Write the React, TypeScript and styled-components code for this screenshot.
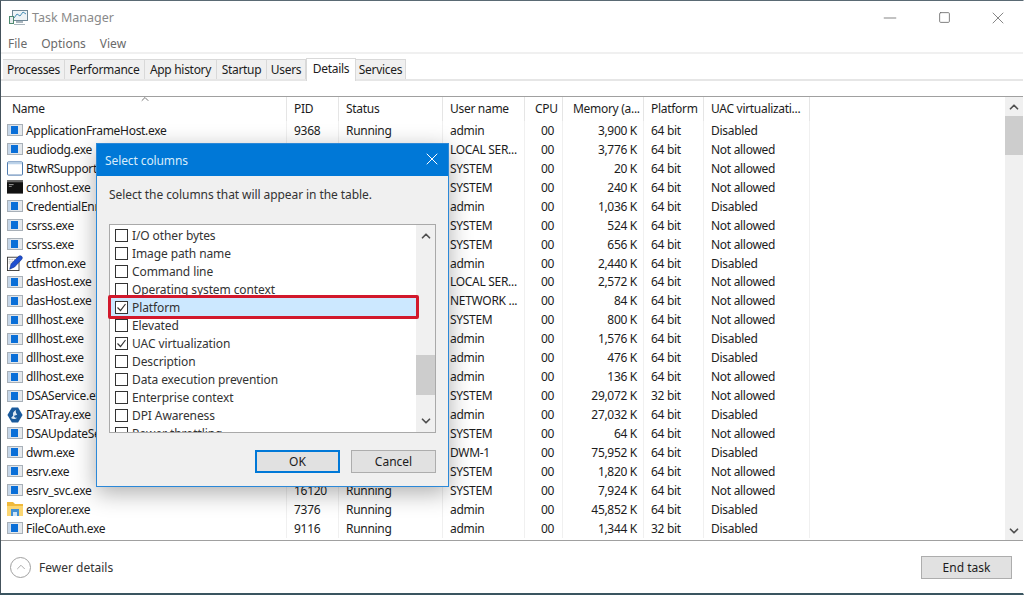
import React from "react";
import styled, { createGlobalStyle } from "styled-components";
import { X, ChevronUp, ChevronDown, Minus, Square } from "lucide-react";

const GlobalStyle = createGlobalStyle`
  html, body {
    margin: 0;
    padding: 0;
    background: #ffffff;
    overflow: hidden;
  }
  * {
    box-sizing: border-box;
  }
`;

const Window = styled.div`
  position: relative;
  width: 1024px;
  height: 595px;
  display: flex;
  flex-direction: column;
  background: #ffffff;
  border-top: 1px solid #5a6a74;
  border-left: 1px solid #44525c;
  border-right: 1px solid #ffffff;
  border-bottom: 2px solid #3a5560;
  font-family: "Noto Sans", "Open Sans", sans-serif;
  font-size: 12px;
  color: #1c1c1c;
  overflow: hidden;
`;

const TitleBar = styled.div`
  height: 33px;
  flex: none;
  display: flex;
  align-items: center;
  padding-left: 8px;
  gap: 4px;
  color: #8a8a8a;
`;

const WindowTitle = styled.span`
  flex: 1;
  font-size: 12.5px;
`;

const WindowButton = styled.div`
  width: 50px;
  height: 33px;
  display: flex;
  align-items: center;
  justify-content: center;
  color: #6e6e6e;
`;

const MenuBar = styled.div`
  height: 20px;
  flex: none;
  display: flex;
  align-items: center;
  gap: 14px;
  padding: 1px 0 0 7px;
  color: #6a6a6a;
  border-bottom: 2px solid #f0f0f0;
`;

const TabStrip = styled.div`
  height: 27px;
  flex: none;
  display: flex;
  align-items: flex-end;
  padding-left: 2px;
  border-bottom: 2px solid #e6e6e6;
  letter-spacing: -0.3px;
`;

const Tab = styled.div<{ $active?: boolean; $width: number }>`
  width: ${({ $width }) => $width}px;
  height: ${({ $active }) => ($active ? 23 : 20)}px;
  margin-bottom: ${({ $active }) => ($active ? -2 : 0)}px;
  padding-bottom: ${({ $active }) => ($active ? 3 : 0)}px;
  display: flex;
  align-items: center;
  justify-content: center;
  background: ${({ $active }) => ($active ? "#ffffff" : "#f0f0f0")};
  border: 1px solid #d9d9d9;
  border-bottom: none;
  border-left-width: ${({ $active }) => ($active ? 1 : 0)}px;
  white-space: nowrap;
  position: relative;
`;

const TabGap = styled.div`
  height: 16px;
  flex: none;
  border-bottom: 1px solid #a0a0a0;
`;

const Content = styled.div`
  flex: 1;
  min-height: 0;
  display: flex;
  border-bottom: 1px solid #a0a0a0;
`;

const Table = styled.div`
  flex: 1;
  min-width: 0;
  position: relative;
  overflow: hidden;
  letter-spacing: -0.3px;
`;

const columns = "286px 52px 104px 82px 38px 81px 60px 106px";

const HeaderRow = styled.div`
  height: 24px;
  display: grid;
  grid-template-columns: ${columns};
  position: relative;
`;

const HeaderCell = styled.div<{ $pad?: number }>`
  display: flex;
  align-items: center;
  padding: 0 0 2px ${({ $pad }) => $pad ?? 7}px;
  border-right: 1px solid #e5e5e5;
  white-space: nowrap;
  overflow: hidden;
`;

const SortArrow = styled.div`
  position: absolute;
  left: 138px;
  top: -4px;
  color: #777777;
  display: flex;
`;

const Row = styled.div`
  height: 18.95px;
  display: grid;
  grid-template-columns: ${columns};
`;

const Cell = styled.div<{ $right?: boolean; $pad?: number }>`
  display: flex;
  align-items: center;
  justify-content: ${({ $right }) => ($right ? "flex-end" : "flex-start")};
  padding: 0 6px 0 ${({ $pad }) => $pad ?? 7}px;
  border-right: 1px solid #f0f0f0;
  white-space: nowrap;
  overflow: hidden;
`;

const NameCell = styled(Cell)`
  padding-left: 6px;
  gap: 3px;
`;

const IconSlot = styled.span`
  width: 16px;
  flex: none;
  display: flex;
  justify-content: center;
`;

const ScrollBar = styled.div<{ $width: number }>`
  width: ${({ $width }) => $width}px;
  flex: none;
  background: #f0f0f0;
  display: flex;
  flex-direction: column;
  align-items: center;
  color: #505050;
`;

const ScrollArrow = styled.div<{ $height: number }>`
  height: ${({ $height }) => $height}px;
  flex: none;
  width: 100%;
  display: flex;
  align-items: center;
  justify-content: center;
`;

const ScrollThumb = styled.div<{ $top: number; $height: number }>`
  width: 100%;
  height: ${({ $height }) => $height}px;
  margin-top: ${({ $top }) => $top}px;
  background: #cdcdcd;
  flex: none;
`;

const ScrollFill = styled.div`
  flex: 1;
`;

const Footer = styled.div`
  height: 52px;
  flex: none;
  display: flex;
  align-items: center;
  justify-content: space-between;
  padding: 0 11px 0 9px;
`;

const FewerDetails = styled.div`
  display: flex;
  align-items: center;
  gap: 8px;
  color: #333333;
`;

const RoundButton = styled.div`
  width: 21px;
  height: 21px;
  border-radius: 50%;
  border: 1px solid #a0a0a0;
  display: flex;
  align-items: center;
  justify-content: center;
  color: #a0a0a0;
`;

const Button = styled.div<{ $default?: boolean; $width: number }>`
  width: ${({ $width }) => $width}px;
  height: 23px;
  display: flex;
  align-items: center;
  justify-content: center;
  background: #e1e1e1;
  border: ${({ $default }) =>
    $default ? "2px solid #0078d7" : "1px solid #adadad"};
  color: #1c1c1c;
`;

const Dialog = styled.div`
  position: absolute;
  left: 95px;
  top: 142px;
  width: 353px;
  height: 344px;
  background: #f0f0f0;
  border: 1px solid #2b88d8;
  box-shadow: 0 6px 22px rgba(0, 0, 0, 0.32);
  display: flex;
  flex-direction: column;
`;

const DialogTitle = styled.div`
  height: 32px;
  flex: none;
  background: #0078d7;
  color: #d8ecfb;
  display: flex;
  align-items: center;
  justify-content: space-between;
  padding: 1px 6px 0 8px;
  letter-spacing: -0.1px;
`;

const CloseIcon = styled.span`
  display: flex;
  color: #ffffff;
  margin-top: -3px;
`;

const DialogBody = styled.div`
  flex: 1;
  display: flex;
  flex-direction: column;
  padding: 10px 12px 13px 12px;
`;

const Prompt = styled.div`
  height: 18px;
  color: #333333;
  margin-bottom: 20px;
  white-space: nowrap;
  letter-spacing: -0.08px;
`;

const ListBox = styled.div`
  height: 209px;
  display: flex;
  background: #ffffff;
  border: 1px solid #a9a9a9;
  overflow: hidden;
`;

const List = styled.div`
  flex: 1;
  min-width: 0;
  display: flex;
  flex-direction: column;
  padding-top: 1px;
`;

const Option = styled.div<{ $selected?: boolean }>`
  height: 18px;
  flex: none;
  display: flex;
  align-items: center;
  gap: 4px;
  padding-left: 5px;
  background: ${({ $selected }) => ($selected ? "#cce8ff" : "transparent")};
  color: #333333;
  white-space: nowrap;
  letter-spacing: -0.1px;
`;

const CheckBox = styled.div`
  width: 13px;
  height: 13px;
  flex: none;
  background: #ffffff;
  border: 1px solid #333333;
  display: flex;
  align-items: center;
  justify-content: center;
`;

const Highlight = styled.div`
  position: absolute;
  left: 11px;
  top: 151px;
  width: 311px;
  height: 24px;
  border: 3px solid #d2192c;
  border-radius: 2px;
`;

const ButtonRow = styled.div`
  display: flex;
  justify-content: flex-end;
  gap: 11px;
  margin-top: 17px;
`;

type IconKind = "app" | "window" | "console" | "pen" | "tray" | "folder";

function ProcessIcon({ kind }: { kind: IconKind }) {
  if (kind === "window") {
    return (
      <svg width="17" height="15" viewBox="0 0 17 15">
        <rect x="0.5" y="0.5" width="16" height="14" rx="1" fill="#fff" stroke="#3f6fa8" />
        <rect x="1" y="1" width="15" height="2" fill="#bcd3ea" />
      </svg>
    );
  }
  if (kind === "console") {
    return (
      <svg width="17" height="14" viewBox="0 0 17 14">
        <rect x="0" y="0" width="17" height="14" fill="#111" />
        <rect x="0" y="0" width="17" height="2" fill="#666" />
        <rect x="2" y="4" width="5" height="1" fill="#aaa" />
        <rect x="2" y="6" width="3" height="1" fill="#888" />
      </svg>
    );
  }
  if (kind === "pen") {
    return (
      <svg width="18" height="18" viewBox="0 0 18 18">
        <rect x="0.5" y="2.5" width="13" height="15" fill="#fff" stroke="#333" />
        <path d="M2 5h9M2 7h7M2 9h5" stroke="#999" strokeWidth="1" strokeDasharray="1 1" />
        <path d="M3 16l1.5-6L13 1.5c1-1 2.5-1 3.5 0s1 2.5 0 3.5L8.5 13.5z" fill="#1f4fd0" stroke="#0b2a80" strokeWidth="0.6" />
      </svg>
    );
  }
  if (kind === "tray") {
    return (
      <svg width="18" height="18" viewBox="0 0 18 18">
        <path d="M5.5 0.5h7l5 8.5-5 8.5h-7L0.5 9z" fill="#1a5a9c" />
        <path d="M10 3.5C7 5 6 7.5 7 9.5l-2.5 3c2 1.5 5 1.5 7-0.5-2 0.5-3.5-0.5-3.5-2 1-0.5 2.5-0.5 3.5-1.5C10.500 7.500 9.500 6 10 3.500z" fill="#dfe9f3" />
      </svg>
    );
  }
  if (kind === "folder") {
    return (
      <svg width="16" height="14" viewBox="0 0 16 14">
        <path d="M0 0h6l2 2h8v12H0z" fill="#f0b93a" />
        <path d="M0 4h16v10H0z" fill="#fbd672" />
        <rect x="4" y="7" width="8" height="7" fill="#3f8fd6" />
        <rect x="6" y="10" width="4" height="4" fill="#cfe4f7" />
      </svg>
    );
  }
  return (
    <svg width="16" height="12" viewBox="0 0 16 12">
      <rect x="0.5" y="0.5" width="15" height="11" fill="#e4e8ec" stroke="#a8b0b8" />
      <rect x="1" y="1" width="2.500" height="10" fill="#c5d6e8" />
      <rect x="4" y="2" width="7" height="8" fill="#0a6fd8" />
    </svg>
  );
}

function AppIcon() {
  return (
    <svg width="19" height="17" viewBox="0 0 19 17">
      <rect x="3.5" y="1.5" width="15" height="10" fill="#eef3f6" stroke="#6f8796" />
      <path d="M5 9l3-4 3 2 3-4 3 2" fill="none" stroke="#4a90b8" strokeWidth="1" />
      <rect x="0.5" y="7.5" width="4" height="7" fill="#e8ecef" stroke="#4f8a70" />
      <path d="M7 12h7v2H7zM5 15h11v1H5z" fill="#a9b5bd" />
    </svg>
  );
}

type Proc = {
  name: string;
  icon: IconKind;
  pid: string;
  user: string;
  memory: string;
  platform: string;
  uac: string;
};

const p = (
  name: string,
  icon: IconKind,
  pid: string,
  user: string,
  memory: string,
  platform: string,
  uac: string,
): Proc => ({ name, icon, pid, user, memory, platform, uac });

const NA = "Not allowed";
const OFF = "Disabled";

// pid stays empty for the rows whose PID and status sit behind the dialog
const processes: Proc[] = [
  p("ApplicationFrameHost.exe", "app", "9368", "admin", "3,900 K", "64 bit", OFF),
  p("audiodg.exe", "app", "", "LOCAL SER...", "3,776 K", "64 bit", NA),
  p("BtwRSupportService.exe", "window", "", "SYSTEM", "20 K", "64 bit", NA),
  p("conhost.exe", "console", "", "SYSTEM", "240 K", "64 bit", NA),
  p("CredentialEnrollmentManager.exe", "app", "", "admin", "1,036 K", "64 bit", OFF),
  p("csrss.exe", "app", "", "SYSTEM", "524 K", "64 bit", NA),
  p("csrss.exe", "app", "", "SYSTEM", "656 K", "64 bit", NA),
  p("ctfmon.exe", "pen", "", "admin", "2,440 K", "64 bit", OFF),
  p("dasHost.exe", "app", "", "LOCAL SER...", "2,572 K", "64 bit", NA),
  p("dasHost.exe", "app", "", "NETWORK ...", "84 K", "64 bit", NA),
  p("dllhost.exe", "app", "", "SYSTEM", "800 K", "64 bit", NA),
  p("dllhost.exe", "app", "", "admin", "1,576 K", "64 bit", OFF),
  p("dllhost.exe", "app", "", "admin", "476 K", "64 bit", OFF),
  p("dllhost.exe", "app", "", "admin", "136 K", "64 bit", NA),
  p("DSAService.exe", "app", "", "SYSTEM", "29,072 K", "32 bit", NA),
  p("DSATray.exe", "tray", "", "admin", "27,032 K", "64 bit", OFF),
  p("DSAUpdateService.exe", "app", "", "SYSTEM", "64 K", "64 bit", NA),
  p("dwm.exe", "app", "", "DWM-1", "75,952 K", "64 bit", OFF),
  p("esrv.exe", "app", "", "SYSTEM", "1,820 K", "64 bit", NA),
  p("esrv_svc.exe", "app", "16120", "SYSTEM", "7,924 K", "64 bit", NA),
  p("explorer.exe", "folder", "7376", "admin", "45,852 K", "64 bit", OFF),
  p("FileCoAuth.exe", "app", "9116", "admin", "1,344 K", "32 bit", OFF),
];

const tabs = [
  { label: "Processes", width: 62 },
  { label: "Performance", width: 80 },
  { label: "App history", width: 72 },
  { label: "Startup", width: 50 },
  { label: "Users", width: 39 },
  { label: "Details", width: 50, active: true },
  { label: "Services", width: 50 },
];

const options = [
  { label: "I/O other bytes" },
  { label: "Image path name" },
  { label: "Command line" },
  { label: "Operating system context" },
  { label: "Platform", checked: true, selected: true },
  { label: "Elevated" },
  { label: "UAC virtualization", checked: true },
  { label: "Description" },
  { label: "Data execution prevention" },
  { label: "Enterprise context" },
  { label: "DPI Awareness" },
  { label: "Power throttling" },
];

function App() {
  return (
    <Window>
      <GlobalStyle />
      <TitleBar>
        <AppIcon />
        <WindowTitle>Task Manager</WindowTitle>
        <WindowButton>
          <Minus size={20} strokeWidth={1} />
        </WindowButton>
        <WindowButton>
          <Square size={13} strokeWidth={1.6} />
        </WindowButton>
        <WindowButton>
          <X size={20} strokeWidth={1} />
        </WindowButton>
      </TitleBar>
      <MenuBar>
        <span>File</span>
        <span>Options</span>
        <span>View</span>
      </MenuBar>
      <TabStrip>
        {tabs.map((t) => (
          <Tab key={t.label} $active={t.active} $width={t.width}>
            {t.label}
          </Tab>
        ))}
      </TabStrip>
      <TabGap />
      <Content>
        <Table>
          <HeaderRow>
            <SortArrow>
              <ChevronUp size={12} strokeWidth={2} />
            </SortArrow>
            <HeaderCell $pad={11}>Name</HeaderCell>
            <HeaderCell>PID</HeaderCell>
            <HeaderCell>Status</HeaderCell>
            <HeaderCell>User name</HeaderCell>
            <HeaderCell $pad={10}>CPU</HeaderCell>
            <HeaderCell $pad={10}>Memory (a...</HeaderCell>
            <HeaderCell>Platform</HeaderCell>
            <HeaderCell>UAC virtualizati...</HeaderCell>
          </HeaderRow>
          {processes.map((proc) => (
            <Row key={proc.name + proc.memory}>
              <NameCell>
                <IconSlot>
                  <ProcessIcon kind={proc.icon} />
                </IconSlot>
                {proc.name}
              </NameCell>
              <Cell>{proc.pid}</Cell>
              <Cell>{proc.pid && "Running"}</Cell>
              <Cell>{proc.user}</Cell>
              <Cell $pad={16}>00</Cell>
              <Cell $right>{proc.memory}</Cell>
              <Cell>{proc.platform}</Cell>
              <Cell>{proc.uac}</Cell>
            </Row>
          ))}
        </Table>
        <ScrollBar $width={18}>
          <ScrollArrow $height={19}>
            <ChevronUp size={14} strokeWidth={3} />
          </ScrollArrow>
          <ScrollThumb $top={0} $height={39} />
          <ScrollFill />
          <ScrollArrow $height={19}>
            <ChevronDown size={14} strokeWidth={3} />
          </ScrollArrow>
        </ScrollBar>
      </Content>
      <Footer>
        <FewerDetails>
          <RoundButton>
            <ChevronUp size={14} strokeWidth={1.5} />
          </RoundButton>
          Fewer details
        </FewerDetails>
        <Button $width={91}>End task</Button>
      </Footer>
      <Dialog>
        <DialogTitle>
          Select columns
          <CloseIcon>
            <X size={20} strokeWidth={1.2} />
          </CloseIcon>
        </DialogTitle>
        <DialogBody>
          <Prompt>Select the columns that will appear in the table.</Prompt>
          <ListBox>
            <List>
              {options.map((o) => (
                <Option key={o.label} $selected={o.selected}>
                  <CheckBox>
                    {o.checked && (
                      <svg width="11" height="11" viewBox="0 0 11 11">
                        <path d="M1.5 5.5l3 3 5-6.5" fill="none" stroke="#333" strokeWidth="1.2" />
                      </svg>
                    )}
                  </CheckBox>
                  {o.label}
                </Option>
              ))}
            </List>
            <ScrollBar $width={19}>
              <ScrollArrow $height={22}>
                <ChevronUp size={14} strokeWidth={3} />
              </ScrollArrow>
              <ScrollThumb $top={108} $height={40} />
              <ScrollFill />
              <ScrollArrow $height={22}>
                <ChevronDown size={14} strokeWidth={3} />
              </ScrollArrow>
            </ScrollBar>
          </ListBox>
          <ButtonRow>
            <Button $default $width={85}>
              OK
            </Button>
            <Button $width={85}>Cancel</Button>
          </ButtonRow>
        </DialogBody>
        <Highlight />
      </Dialog>
    </Window>
  );
}

export default App;
